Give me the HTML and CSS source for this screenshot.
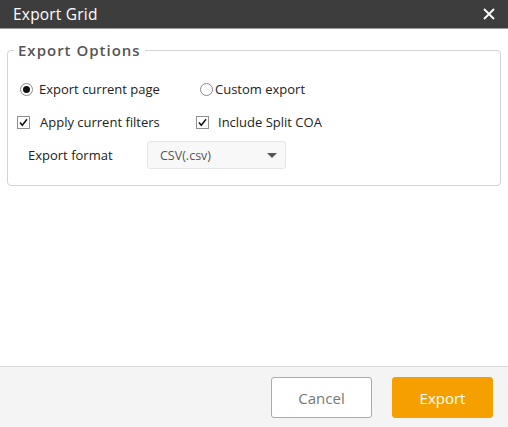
FILE: index.html
```html
<!DOCTYPE html>
<html>
<head>
<meta charset="utf-8">
<link rel="stylesheet" href="styles.css">
</head>
<body>
<div class="dialog">
  <div class="titlebar">
    <span class="title">Export Grid</span>
    <svg class="close" width="12" height="12" viewBox="0 0 12 12"><path d="M1 1L11 11M11 1L1 11" stroke="#fff" stroke-width="1.8" fill="none"/></svg>
  </div>
  <div class="content">
    <fieldset class="options">
      <legend class="legend">Export Options</legend>
      <div class="row row1">
        <label class="opt opt-a">
          <span class="radio checked"><span class="dot"></span></span>
          <span class="txt">Export current page</span>
        </label>
        <label class="opt opt-b">
          <span class="radio"></span>
          <span class="txt">Custom export</span>
        </label>
      </div>
      <div class="row row2">
        <label class="opt opt-c">
          <span class="check"><svg width="11" height="11" viewBox="0 0 11 11"><path d="M2 5.5L4.3 8.3L9 2.2" stroke="#111" stroke-width="1.5" fill="none"/></svg></span>
          <span class="txt">Apply current filters</span>
        </label>
        <label class="opt opt-d">
          <span class="check"><svg width="11" height="11" viewBox="0 0 11 11"><path d="M2 5.5L4.3 8.3L9 2.2" stroke="#111" stroke-width="1.5" fill="none"/></svg></span>
          <span class="txt">Include Split COA</span>
        </label>
      </div>
      <div class="row row3">
        <span class="fmt-label">Export format</span>
        <div class="select">
          <span class="sel-text">CSV(.csv)</span>
          <span class="caret"></span>
        </div>
      </div>
    </fieldset>
  </div>
  <div class="footer">
    <button class="btn cancel">Cancel</button>
    <button class="btn export">Export</button>
  </div>
</div>
</body>
</html>
```
FILE: styles.css
```css
html, body {
  margin: 0;
  padding: 0;
  background: #fff;
}
.dialog {
  width: 508px;
  height: 427px;
  display: flex;
  flex-direction: column;
  font-family: "Open Sans", "Noto Sans", sans-serif;
  font-size: 13px;
  color: #222;
}
.titlebar {
  height: 28px;
  background: #3d3d3d;
  border-bottom: 1px solid #9a9a9a;
  display: flex;
  align-items: center;
  justify-content: space-between;
  padding: 0 13px 0 13px;
  flex-shrink: 0;
}
.title {
  color: #fff;
  font-size: 15.5px;
  letter-spacing: 0.2px;
}
.close {
  display: block;
}
.content {
  flex: 1;
  padding: 11px 7px 0 7px;
}
.options {
  margin: 0;
  padding: 19px 0 16px 0;
  border: 1px solid #d4d4d4;
  border-radius: 4px;
  min-width: 0;
}
.legend {
  margin-left: 6px;
  padding: 0 4px;
  font-size: 15px;
  line-height: 20px;
  font-weight: 600;
  color: #555;
  letter-spacing: 1px;
}
.row {
  display: flex;
  align-items: center;
  height: 20px;
}
.row2 {
  margin-top: 13px;
}
.row3 {
  margin-top: 9px;
  height: 28px;
}
.opt {
  display: flex;
  align-items: center;
}
.opt-a {
  margin-left: 12px;
  width: 180px;
}
.opt-c {
  margin-left: 9px;
  width: 179px;
}
.radio {
  width: 11px;
  height: 11px;
  border: 1px solid #8a8a8a;
  border-radius: 50%;
  display: flex;
  align-items: center;
  justify-content: center;
  background: #fff;
  flex-shrink: 0;
}
.dot {
  width: 7px;
  height: 7px;
  border-radius: 50%;
  background: #111;
}
.opt-a .txt { margin-left: 6px; }
.opt-b .txt { margin-left: 2px; }
.check {
  width: 11px;
  height: 11px;
  border: 1px solid #8f8f8f;
  background: #fff;
  display: flex;
  flex-shrink: 0;
}
.check svg { display: block; }
.opt-c .txt { margin-left: 10px; }
.opt-d .txt { margin-left: 9px; }
.fmt-label {
  margin-left: 20px;
  width: 119px;
}
.select {
  height: 26px;
  border: 1px solid #e6e6e6;
  border-radius: 3px;
  background: #f8f8f8;
  display: flex;
  align-items: center;
  justify-content: space-between;
  padding: 0 8px 0 12px;
  box-sizing: content-box;
  width: 117px;
}
.sel-text {
  color: #555;
  font-size: 12.5px;
}
.caret {
  width: 0;
  height: 0;
  border-left: 5px solid transparent;
  border-right: 5px solid transparent;
  border-top: 5px solid #555;
}
.footer {
  height: 61px;
  box-sizing: border-box;
  border-top: 1px solid #d6d6d6;
  background: #f4f4f4;
  display: flex;
  justify-content: flex-end;
  align-items: flex-start;
  padding: 10px 15px 0 0;
  gap: 20px;
  flex-shrink: 0;
}
.btn {
  width: 101px;
  height: 41px;
  border-radius: 3px;
  font-family: "Open Sans", "Noto Sans", sans-serif;
  font-size: 15px;
  cursor: pointer;
}
.cancel {
  background: #fff;
  border: 1px solid #aaa;
  color: #777;
}
.export {
  background: #f5a000;
  border: 1px solid #f5a000;
  color: #fff;
}
```
